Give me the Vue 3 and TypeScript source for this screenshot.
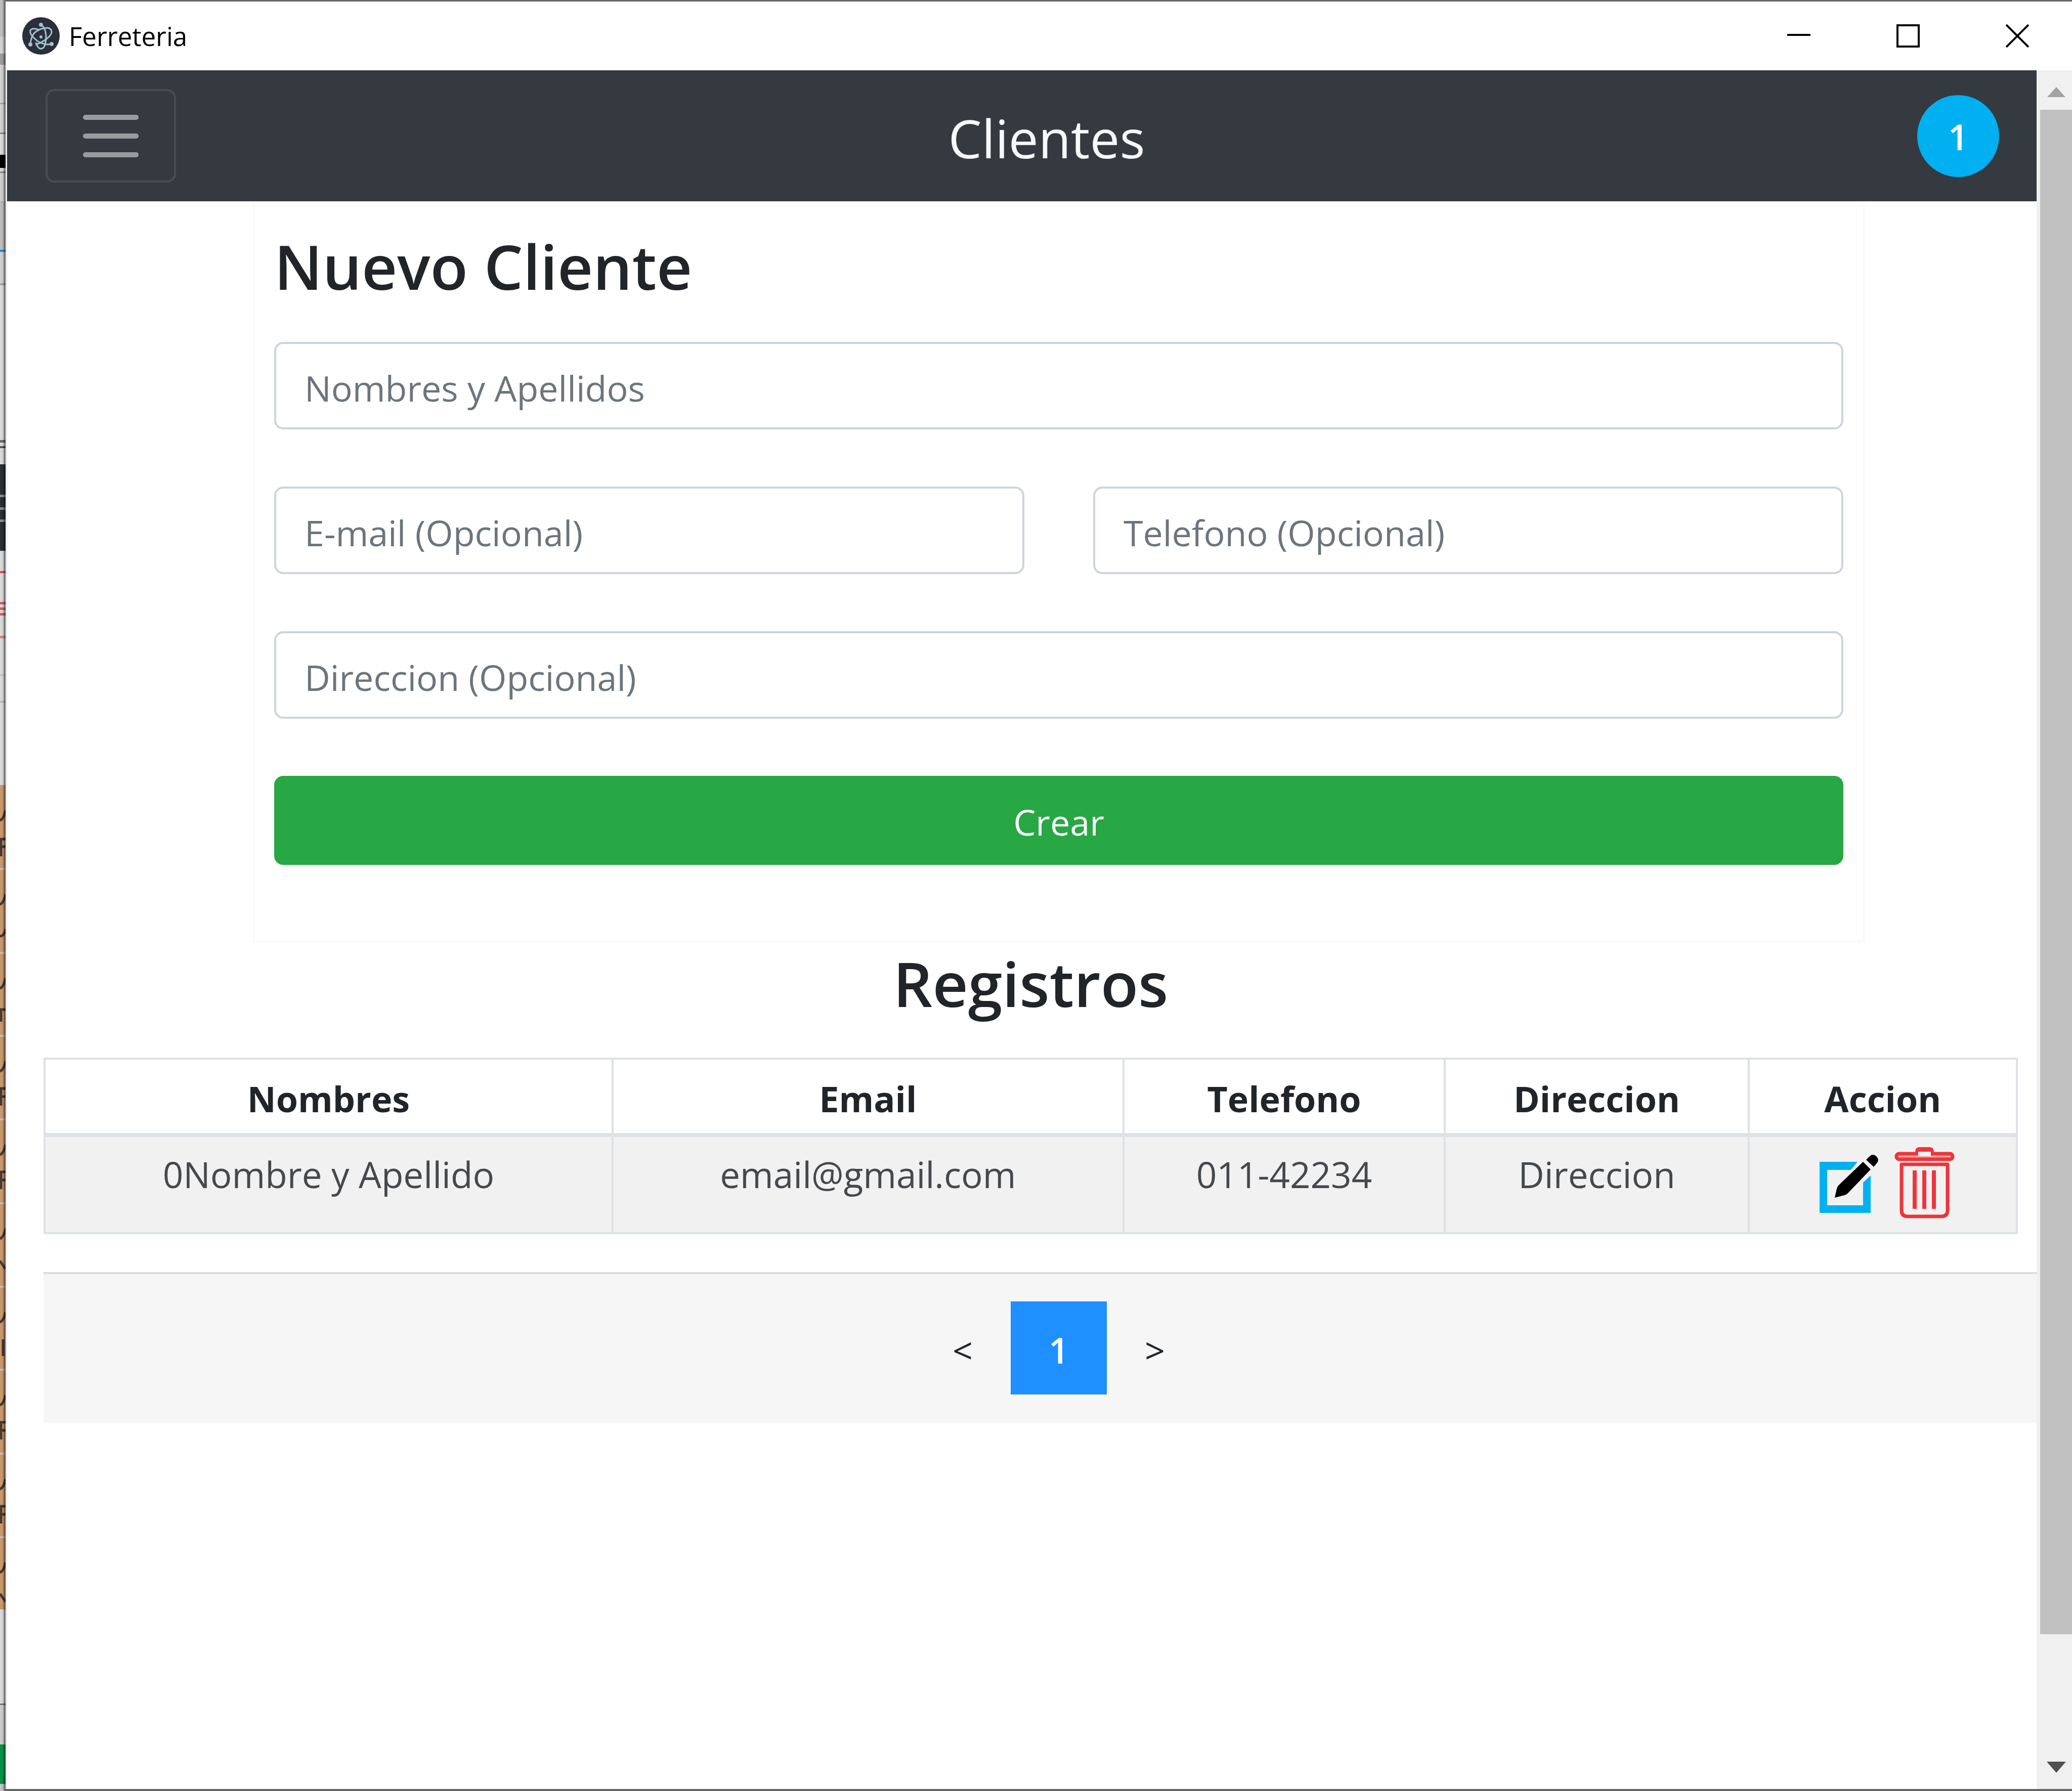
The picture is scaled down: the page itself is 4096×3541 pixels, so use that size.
<script setup lang="ts">
import { ref } from 'vue'

interface Cliente {
  nombre: string
  email: string
  telefono: string
  direccion: string
}

const columnas: string[] = ['Nombres', 'Email', 'Telefono', 'Direccion', 'Accion']
const clientes = ref<Cliente[]>([
  { nombre: '0Nombre y Apellido', email: 'email@gmail.com', telefono: '011-42234', direccion: 'Direccion' },
])

const form = ref({ nombre: '', email: '', telefono: '', direccion: '' })

interface Franja {
  y: number
  h: number
  color: string
}

// Sliver of the desktop that stays visible at the left of the window
const franjas: Franja[] = [
  { y: 0, h: 73, color: '#c0c0c0' },
  { y: 73, h: 190, color: '#d4d4d4' },
  { y: 106, h: 22, color: '#a0a0a0' },
  { y: 203, h: 3, color: '#a8a8a8' },
  { y: 262, h: 3, color: '#888888' },
  { y: 306, h: 26, color: '#000000' },
  { y: 339, h: 3, color: '#888888' },
  { y: 342, h: 56, color: '#d2d2d2' },
  { y: 398, h: 3, color: '#b4b4b4' },
  { y: 401, h: 93, color: '#c0c0c0' },
  { y: 494, h: 4, color: '#1f8fcb' },
  { y: 498, h: 62, color: '#d4d4d4' },
  { y: 560, h: 4, color: '#a8a8a8' },
  { y: 870, h: 5, color: '#6c6a68' },
  { y: 882, h: 4, color: '#55585c' },
  { y: 918, h: 171, color: '#2b3034' },
  { y: 978, h: 5, color: '#8b8f92' },
  { y: 1003, h: 5, color: '#8b8f92' },
  { y: 1027, h: 5, color: '#8b8f92' },
  { y: 1129, h: 4, color: '#e04a4a' },
  { y: 1190, h: 5, color: '#d96262' },
  { y: 1201, h: 5, color: '#d96262' },
  { y: 1212, h: 5, color: '#d96262' },
  { y: 1257, h: 5, color: '#dc8686' },
  { y: 1333, h: 3, color: '#c4c4c4' },
  { y: 1386, h: 3, color: '#b8b8b8' },
  { y: 1552, h: 1630, color: '#cb9b70' },
  { y: 3368, h: 3, color: '#777777' },
  { y: 3371, h: 78, color: '#cfcfcf' },
  { y: 3449, h: 78, color: '#009547' },
  { y: 3527, h: 14, color: '#c8c8c8' },
]
const filas: number[] = [1552, 1718, 1884, 2048, 2213, 2379, 2544, 2708, 2874, 3039]
const letras: string[] = [
  'M2 141V107H11M2 122H11',
  'M0 133Q8 133 11 119',
  'M2 136V112H11',
  'M2 138V104H11M0 120H11',
  'M2 138V104H11M0 120H11',
  'M0 114L11 130',
  'M6 104V137',
  'M2 138V104H11M0 120H11',
  'M2 138V104H11M0 120H11',
  'M0 112L11 128',
]
</script>

<template>
  <div class="desktop">
    <svg class="backdrop" viewBox="0 0 11 3541" preserveAspectRatio="none" aria-hidden="true">
      <defs>
        <linearGradient id="shade" x1="0" x2="1" y1="0" y2="0">
          <stop offset="0" stop-color="#000" stop-opacity="0" />
          <stop offset="0.5" stop-color="#000" stop-opacity="0.06" />
          <stop offset="0.85" stop-color="#000" stop-opacity="0.5" />
          <stop offset="1" stop-color="#000" stop-opacity="0.45" />
        </linearGradient>
      </defs>
      <rect width="11" height="3541" fill="#dddddd" />
      <rect v-for="f in franjas" :key="f.y" x="0" :y="f.y" width="11" :height="f.h" :fill="f.color" />
      <g v-for="(y, i) in filas" :key="y" :transform="`translate(0 ${y})`" fill="none" stroke="#4a3a2e">
        <path v-if="i > 0" d="M0 0H11" stroke="#c9c2bb" stroke-width="4" />
        <path d="M0 70Q7 68 11 50" stroke-width="5" />
        <path :d="letras[i]" stroke-width="5" />
      </g>
      <rect width="11" height="3541" fill="url(#shade)" />
    </svg>

    <div class="window">
      <header class="titlebar">
        <svg class="app-icon" viewBox="0 0 74 74" aria-hidden="true">
          <circle cx="37" cy="37" r="37" fill="#2b2e3b" />
          <g fill="none" stroke="#9fc3cd" stroke-width="3">
            <path d="M51 21Q58 23 58 29Q58 35 49 42Q38 51 26 54" />
            <path d="M33 25Q20 20 16 26Q14 33 24 42Q35 53 50 54L58 53" />
            <path d="M42 22Q32 24 24 31Q17 39 16 54" />
            <path d="M37 15Q46 20 47 38Q47 52 43 59Q37 66 31 59Q28 55 27 50" />
            <path d="M44 22Q49 20 53 22" />
          </g>
          <g fill="#9fc3cd">
            <circle cx="37" cy="39" r="3" />
            <circle cx="37" cy="15" r="4" />
            <circle cx="16" cy="54" r="4" />
            <circle cx="58" cy="53" r="4" />
          </g>
        </svg>
        <span class="app-name">Ferreteria</span>
        <div class="controls">
          <button type="button" aria-label="Minimizar">
            <svg viewBox="0 0 46 46"><path d="M0 21H46" /></svg>
          </button>
          <button type="button" aria-label="Maximizar">
            <svg viewBox="0 0 46 46"><path d="M2 2H44V44H2Z" /></svg>
          </button>
          <button type="button" aria-label="Cerrar">
            <svg viewBox="0 0 46 46"><path d="M1 1L45 45M45 1L1 45" /></svg>
          </button>
        </div>
      </header>

      <div class="viewport">
        <main class="page">
          <nav class="navbar">
            <button type="button" class="toggler" aria-label="Menu">
              <svg viewBox="0 0 110 84"><path d="M5 5H105M5 42H105M5 79H105" /></svg>
            </button>
            <span class="brand">Clientes</span>
            <span class="badge">1</span>
          </nav>

          <div class="content">
            <section class="row">
              <form class="card" @submit.prevent>
                <h1>Nuevo Cliente</h1>
                <input v-model="form.nombre" type="text" placeholder="Nombres y Apellidos" aria-label="Nombres y Apellidos" />
                <div class="pair">
                  <input v-model="form.email" type="text" placeholder="E-mail (Opcional)" aria-label="E-mail (Opcional)" />
                  <input v-model="form.telefono" type="text" placeholder="Telefono (Opcional)" aria-label="Telefono (Opcional)" />
                </div>
                <input v-model="form.direccion" type="text" placeholder="Direccion (Opcional)" aria-label="Direccion (Opcional)" />
                <button type="submit" class="submit">Crear</button>
              </form>
            </section>

            <section class="records">
              <h2>Registros</h2>
              <table>
                <colgroup>
                  <col class="c-name" /><col class="c-email" /><col class="c-phone" /><col class="c-address" /><col />
                </colgroup>
                <thead>
                  <tr>
                    <th v-for="c in columnas" :key="c" scope="col">{{ c }}</th>
                  </tr>
                </thead>
                <tbody>
                  <tr v-for="c in clientes" :key="c.nombre">
                    <td>{{ c.nombre }}</td>
                    <td>{{ c.email }}</td>
                    <td>{{ c.telefono }}</td>
                    <td>{{ c.direccion }}</td>
                    <td>
                      <div class="actions">
                        <button type="button" aria-label="Editar">
                          <svg width="118" height="142" viewBox="0 0 118 142">
                            <path fill="#00b0f0" d="M0 29H75L62 45H15V115H86V70L101 56V130H0Z" />
                            <path d="M86 29L101 44L56 91Q53 94 49 95L30 100L34 82Q35 78 38 75Z" />
                            <path d="M92 25L99 18Q105 12 112 18Q119 25 113 32L107 39Z" />
                          </svg>
                        </button>
                        <button type="button" aria-label="Eliminar">
                          <svg width="119" height="142" viewBox="0 0 119 142">
                            <g fill="none" stroke="#ef343b" stroke-width="7">
                              <rect x="4" y="13" width="111" height="11" rx="5" fill="#f4a0a3" />
                              <path d="M14 34H105V125Q105 137 93 137H26Q14 137 14 125Z" stroke-linejoin="round" />
                              <path d="M40 46V122M59 46V122M78 46V122" stroke-width="8" />
                            </g>
                            <path fill="#ef343b" d="M41 16V9Q41 0 50 0H69Q78 0 78 9V16Z" />
                            <path fill="#f1f1f1" d="M47 9H72V18H47Z" />
                          </svg>
                        </button>
                      </div>
                    </td>
                  </tr>
                </tbody>
              </table>
            </section>

            <nav class="pagination" aria-label="Paginas">
              <a href="#">&lt;</a>
              <a href="#" class="active">1</a>
              <a href="#">&gt;</a>
            </nav>
          </div>
        </main>

        <div class="scrollbar" aria-hidden="true">
          <svg width="36" height="20" viewBox="0 0 36 20"><path fill="#a3a3a3" d="M18 0L36 20H0Z" /></svg>
          <div class="track"><div class="thumb"></div></div>
          <svg width="38" height="22" viewBox="0 0 38 22"><path fill="#505050" d="M0 0H38L19 22Z" /></svg>
        </div>
      </div>
    </div>
  </div>
</template>

<style>
body {
  background: #fff;
}
</style>

<style scoped>
* {
  box-sizing: border-box;
}

.desktop {
  display: flex;
  height: 100vh;
  overflow: hidden;
  font-family: 'Open Sans', 'Noto Sans', sans-serif;
  font-size: 70px;
  line-height: 108px;
  color: #212529;
}

button {
  font: inherit;
  border: 0;
  padding: 0;
  background: none;
}

svg {
  display: block;
}

.backdrop {
  flex: none;
  width: 11px;
  height: 100%;
}

.window {
  flex: 1;
  min-width: 0;
  display: flex;
  flex-direction: column;
  border-top: 3px solid #666;
  border-bottom: 4px solid #666;
  background: #fff;
}

.titlebar {
  flex: none;
  display: flex;
  align-items: center;
  height: 136px;
  padding-left: 33px;
}

.app-icon {
  width: 74px;
  height: 74px;
}

.app-name {
  margin-left: 18px;
  font-size: 51px;
  line-height: 72px;
  color: #000;
}

.controls {
  display: flex;
  margin-left: auto;
}

.controls button {
  display: flex;
  align-items: center;
  justify-content: center;
  width: 216px;
  height: 136px;
}

.controls svg {
  width: 46px;
  height: 46px;
  fill: none;
  stroke: #000;
  stroke-width: 4;
}

.viewport {
  flex: 1;
  min-height: 0;
  display: flex;
}

.page {
  flex: 1;
  min-width: 0;
  overflow: hidden;
  border-left: 3px solid #e6e9ed;
}

.navbar {
  display: flex;
  align-items: center;
  justify-content: space-between;
  height: 259px;
  padding: 0 74px 0 76px;
  background: #343a40;
}

.toggler {
  display: flex;
  align-items: center;
  justify-content: center;
  width: 258px;
  height: 185px;
  border: 4px solid #484d51;
  border-radius: 18px;
}

.toggler svg {
  width: 110px;
  height: 84px;
  fill: none;
  stroke: #999c9f;
  stroke-width: 10;
  stroke-linecap: round;
}

.brand {
  padding-top: 8px;
  font-size: 105px;
  font-weight: 500;
  color: #f8f9fa;
}

.badge {
  width: 162px;
  height: 162px;
  border-radius: 50%;
  background: #00b0f0;
  color: #fff;
  font-weight: 600;
  line-height: 164px;
  text-align: center;
}

.content {
  padding-left: 72px;
}

.row {
  margin-right: -74px;
}

.card {
  display: flex;
  flex-direction: column;
  gap: 113px;
  margin: 0 414px;
  padding: 52px 39px 150px;
  border: 3px solid #f8f9fa;
  border-top: 0;
}

h1,
h2 {
  margin: 0;
  font-size: 122px;
  font-weight: 600;
  line-height: 152px;
}

h1 {
  margin-bottom: -39px;
}

.card input {
  width: 100%;
  min-width: 0;
  height: 173px;
  padding: 8px 56px 0;
  border: 4px solid #ced4da;
  border-radius: 18px;
  background: #fff;
  font: inherit;
  color: #495057;
}

.card input::placeholder {
  color: #6c757d;
  opacity: 1;
}

.pair {
  display: flex;
  gap: 136px;
}

.submit {
  height: 176px;
  padding-top: 6px;
  border-radius: 18px;
  background: #28a745;
  color: #fff;
}

.records {
  margin-right: 37px;
}

h2 {
  padding-top: 5px;
  text-align: center;
}

table {
  width: 100%;
  margin-top: 71px;
  border-collapse: collapse;
  table-layout: fixed;
}

th,
td {
  padding: 0;
  border: 4px solid #dee2e6;
  text-align: center;
  vertical-align: top;
}

th {
  height: 151px;
  padding-top: 23px;
  border-bottom-width: 8px;
  font-weight: 700;
}

td {
  height: 194px;
  padding-top: 20px;
  background: #f1f1f1;
  font-size: 71px;
  color: #45494d;
}

.c-name {
  width: 28.8%;
}

.c-email {
  width: 25.9%;
}

.c-phone {
  width: 16.3%;
}

.c-address {
  width: 15.4%;
}

.actions {
  display: flex;
  justify-content: center;
  gap: 30px;
  padding-left: 18px;
}

.pagination {
  display: flex;
  justify-content: center;
  height: 298px;
  margin-top: 75px;
  margin-right: -74px;
  padding-top: 54px;
  border-top: 4px solid #dcdddf;
  background: #f6f6f6;
}

.pagination a {
  width: 190px;
  height: 184px;
  padding-top: 42px;
  color: #212529;
  text-align: center;
  text-decoration: none;
}

.pagination .active {
  background: #1e90ff;
  color: #fff;
  font-weight: 600;
}

.scrollbar {
  flex: none;
  display: flex;
  flex-direction: column;
  align-items: center;
  width: 70px;
  padding: 33px 0 32px 7px;
  background: #f0f0f0;
}

.track {
  flex: 1;
  align-self: stretch;
  margin: 25px 0;
}

.thumb {
  height: 93%;
  background: #c1c1c1;
}
</style>
